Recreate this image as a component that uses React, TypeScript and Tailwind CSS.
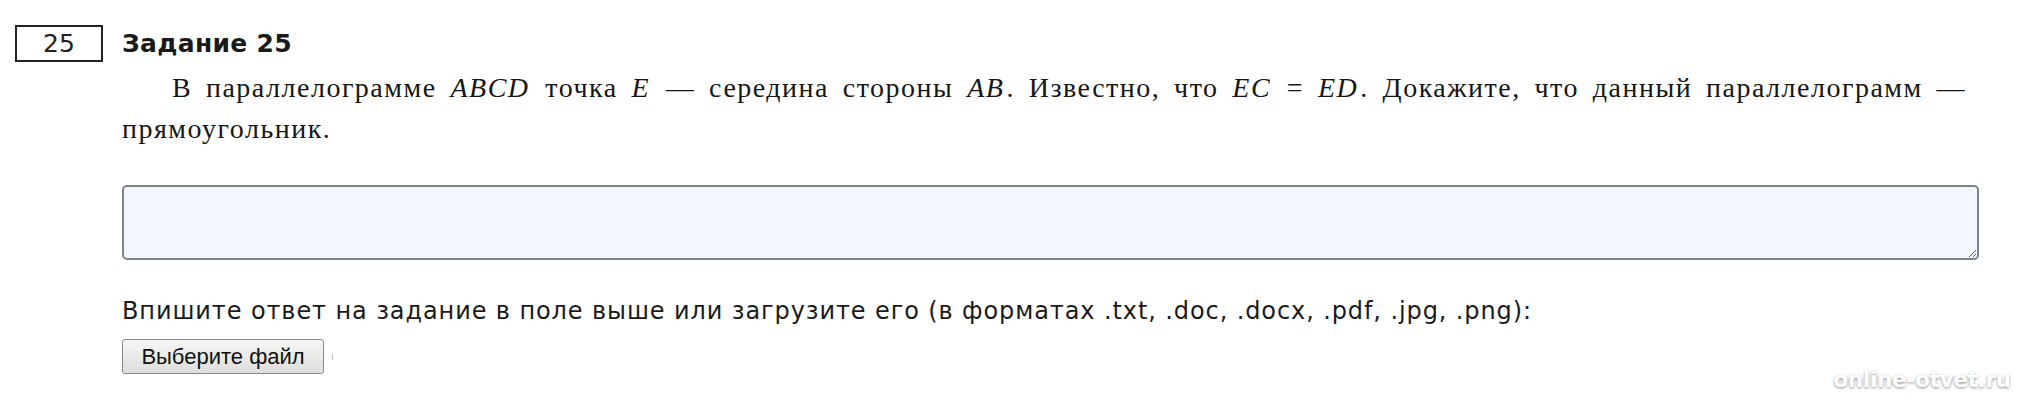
const serif = { fontFamily: '"Liberation Serif", "Times New Roman", serif' };

function M({ children }: { children: React.ReactNode }) {
  return <i className="mr-[2px] italic">{children}</i>;
}

export default function App() {
  return (
    <div className="relative h-[400px] w-[2019px] overflow-hidden bg-white text-[#111]">
      <div className="flex pt-[25px] pl-[15px]">
        <div className="flex h-[37px] w-[88px] shrink-0 items-center justify-center border-2 border-[#222] font-['DejaVu_Sans',sans-serif] text-[25px] text-[#222]">
          25
        </div>
        <div className="ml-[19px] w-[1857px]">
          <h2 className="flex h-[37px] items-center font-['DejaVu_Sans',sans-serif] text-[25px] font-bold tracking-[0.3px] text-[#1a1a1a]">
            Задание 25
          </h2>
          <p
            className="mt-[5px] pr-[13px] text-justify indent-[50px] text-[28px] leading-[41px] tracking-[1.5px] text-[#161616]"
            style={serif}
          >
            В параллелограмме <M>ABCD</M> точка <M>E</M> — середина стороны <M>AB</M>. Известно, что{" "}
            <M>EC</M> = <M>ED</M>. <span>Докажите, что данный параллелограмм —</span> <span>прямоугольник.</span>
          </p>
          <textarea className="mt-[36px] block h-[75px] w-full resize-y rounded-[5px] border-2 border-[#7d838c] bg-[#f3f7fd] outline-none" />
          <p className="mt-[36px] font-['DejaVu_Sans',sans-serif] text-[24px] leading-[30px] tracking-[0.9px] text-[#1a1a1a]">
            Впишите ответ на задание в поле выше или загрузите его (в форматах .txt, .doc, .docx, .pdf, .jpg, .png):
          </p>
          <div className="mt-[13px] flex items-center">
            <button className="h-[35px] w-[202px] rounded-[3px] border border-[#8a8a8a] bg-gradient-to-b from-[#f6f6f6] to-[#dedede] font-['Liberation_Sans',Arial,sans-serif] text-[22px] text-[#111]">
              Выберите файл
            </button>
            <span className="ml-[8px] h-[6px] w-px bg-[#bbb]" />
          </div>
        </div>
      </div>
      <div className="absolute right-[8px] bottom-[4px] font-['DejaVu_Sans',sans-serif] text-[21px] font-bold text-white [text-shadow:0_1px_3px_rgba(0,0,0,0.45)]">
        online-otvet.ru
      </div>
    </div>
  );
}
